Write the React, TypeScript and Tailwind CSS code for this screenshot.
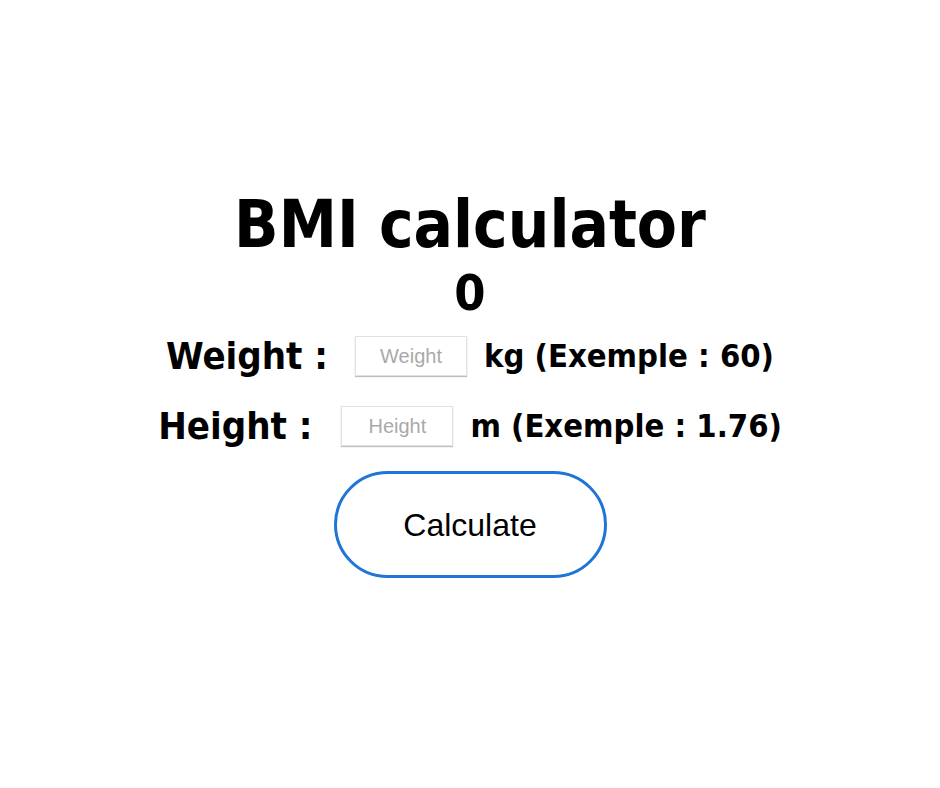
import { useState } from "react";

export default function App() {
  const [weight, setWeight] = useState("");
  const [height, setHeight] = useState("");
  const [bmi, setBmi] = useState<number | string>(0);

  const calculate = () => {
    const w = parseFloat(weight);
    const h = parseFloat(height);
    if (w > 0 && h > 0) setBmi((w / (h * h)).toFixed(2));
  };

  return (
    <div className="w-[940px] h-[788px] bg-white flex flex-col items-center pt-[187px] text-black font-['DejaVu_Sans_Condensed','DejaVu_Sans',sans-serif]">
      <h1 className="text-[65px] font-bold leading-[76px]">BMI calculator</h1>
      <h2 className="mt-[4px] text-[50px] font-bold leading-[52px]">{bmi}</h2>
      <div className="flex items-center mt-[12px] h-[50px]">
        <span className="text-[38px] font-bold">Weight :</span>
        <input
          value={weight}
          onChange={(e) => setWeight(e.target.value)}
          placeholder="Weight"
          className="ml-[27px] mr-[17px] w-[112px] h-[40px] border border-[#e2e2e2] shadow-[0_1px_1px_rgba(0,0,0,0.25)] text-center text-[20px] font-['Liberation_Sans',sans-serif] placeholder:text-[#a9a9a9] outline-none"
        />
        <span className="text-[32.5px] font-bold">kg (Exemple : 60)</span>
      </div>
      <div className="flex items-center mt-[20px] h-[50px]">
        <span className="text-[38px] font-bold">Height :</span>
        <input
          value={height}
          onChange={(e) => setHeight(e.target.value)}
          placeholder="Height"
          className="ml-[29px] mr-[17px] w-[112px] h-[40px] border border-[#e2e2e2] shadow-[0_1px_1px_rgba(0,0,0,0.25)] text-center text-[20px] font-['Liberation_Sans',sans-serif] placeholder:text-[#a9a9a9] outline-none"
        />
        <span className="text-[32.5px] font-bold">m (Exemple : 1.76)</span>
      </div>
      <button
        onClick={calculate}
        className="mt-[20px] w-[273px] h-[107px] rounded-full border-[3px] border-[#1f74d8] bg-white text-[32px] font-['Liberation_Sans',sans-serif]"
      >
        Calculate
      </button>
    </div>
  );
}
